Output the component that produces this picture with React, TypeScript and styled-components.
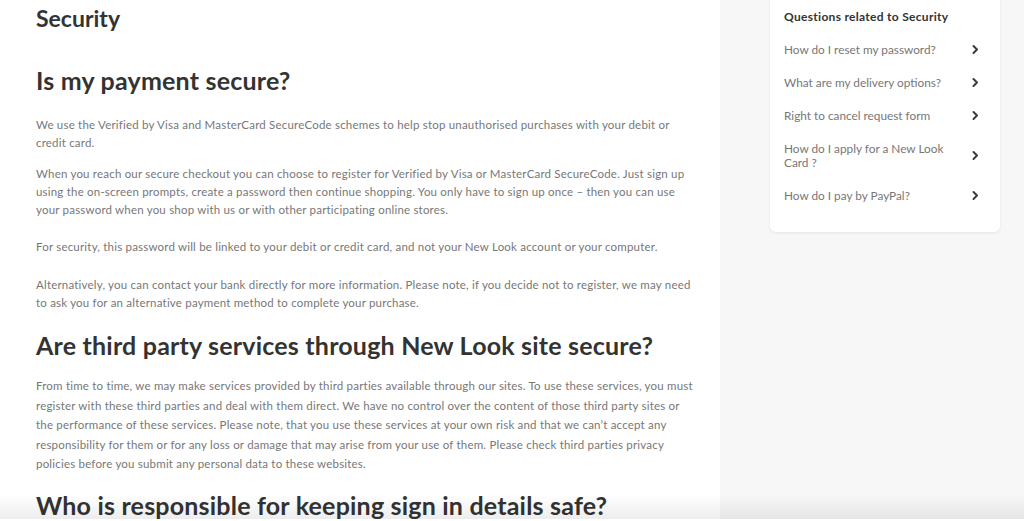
import React from 'react';
import styled, { createGlobalStyle } from 'styled-components';

const GlobalStyle = createGlobalStyle`
  html, body {
    margin: 0;
    padding: 0;
    background: #f7f7f7;
    font-family: Lato, 'Open Sans', sans-serif;
    -webkit-font-smoothing: antialiased;
  }
  * { box-sizing: border-box; }
`;

const related = [
  'How do I reset my password?',
  'What are my delivery options?',
  'Right to cancel request form',
  'How do I apply for a New Look Card ?',
  'How do I pay by PayPal?',
];

// lines kept as in the source layout so the wrapping matches
const Lines = ({ lines }: { lines: string[] }) => (
  <>
    {lines.map((l, i) => (
      <React.Fragment key={i}>
        {i > 0 && <br />}
        {l}
      </React.Fragment>
    ))}
  </>
);

const Chevron = () => (
  <svg width="9" height="11" viewBox="0 0 9 11" fill="none">
    <path d="M2.5 2L6 5.5L2.5 9" stroke="#3a3a3a" strokeWidth="2" strokeLinecap="round" strokeLinejoin="round" />
  </svg>
);

export default function App() {
  return (
    <>
      <GlobalStyle />
      <Layout>
        <Main>
          <PageTitle>Security</PageTitle>

          <Question $top={34}>Is my payment secure?</Question>
          <Paragraph $top={21}>
            <Lines
              lines={[
                'We use the Verified by Visa and MasterCard SecureCode schemes to help stop unauthorised purchases with your debit or',
                'credit card.',
              ]}
            />
          </Paragraph>
          <Paragraph $top={13}>
            <Lines
              lines={[
                'When you reach our secure checkout you can choose to register for Verified by Visa or MasterCard SecureCode. Just sign up',
                'using the on-screen prompts, create a password then continue shopping. You only have to sign up once – then you can use',
                'your password when you shop with us or with other participating online stores.',
              ]}
            />
          </Paragraph>
          <Paragraph $top={19}>
            For security, this password will be linked to your debit or credit card, and not your New Look account or your computer.
          </Paragraph>
          <Paragraph $top={20}>
            <Lines
              lines={[
                'Alternatively, you can contact your bank directly for more information. Please note, if you decide not to register, we may need',
                'to ask you for an alternative payment method to complete your purchase.',
              ]}
            />
          </Paragraph>

          <Question $top={18}>Are third party services through New Look site secure?</Question>
          <Paragraph $top={16} $loose>
            <Lines
              lines={[
                'From time to time, we may make services provided by third parties available through our sites. To use these services, you must',
                'register with these third parties and deal with them direct. We have no control over the content of those third party sites or',
                'the performance of these services. Please note, that you use these services at your own risk and that we can’t accept any',
                'responsibility for them or for any loss or damage that may arise from your use of them. Please check third parties privacy',
                'policies before you submit any personal data to these websites.',
              ]}
            />
          </Paragraph>

          <Question $top={16}>Who is responsible for keeping sign in details safe?</Question>
        </Main>

        <Aside>
          <Card>
            <CardTitle>Questions related to Security</CardTitle>
            <LinkList>
              {related.map((q) => (
                <LinkRow key={q}>
                  <LinkText>{q}</LinkText>
                  <Chevron />
                </LinkRow>
              ))}
            </LinkList>
          </Card>
        </Aside>
      </Layout>
      <BottomShade />
    </>
  );
}

const Layout = styled.div`
  display: flex;
  align-items: flex-start;
  height: 100vh;
  overflow: hidden;
`;

const Main = styled.main`
  width: 720px;
  flex-shrink: 0;
  min-height: 100vh;
  background: #fff;
  padding: 5px 0 40px 36px;
  color: #333;
`;

const PageTitle = styled.h1`
  margin: 0;
  font-size: 23px;
  line-height: 26px;
  font-weight: 700;
  color: #333;
`;

const Question = styled.h2<{ $top: number }>`
  margin: ${(p) => p.$top}px 0 0;
  font-size: 25px;
  line-height: 30px;
  font-weight: 700;
  color: #333;
  letter-spacing: 0.2px;
`;

const Paragraph = styled.p<{ $top: number; $loose?: boolean }>`
  margin: ${(p) => p.$top}px 0 0;
  font-size: 11.5px;
  line-height: ${(p) => (p.$loose ? '19.5px' : '18px')};
  color: #777;
  letter-spacing: 0.2px;
`;

const Aside = styled.aside`
  padding-left: 50px;
  width: 280px;
`;

const Card = styled.div`
  width: 230px;
  background: #fff;
  border-radius: 0 0 6px 6px;
  box-shadow: 0 1px 3px rgba(0, 0, 0, 0.08);
  padding: 10px 14px 20px;
`;

const CardTitle = styled.div`
  font-size: 12px;
  line-height: 14px;
  font-weight: 700;
  color: #333;
  letter-spacing: 0.3px;
`;

const LinkList = styled.div`
  display: flex;
  flex-direction: column;
  margin-top: 9px;
`;

const LinkRow = styled.div`
  display: flex;
  align-items: center;
  justify-content: space-between;
  padding: 9.5px 6px 9.5px 0;
  cursor: pointer;
`;

const LinkText = styled.span`
  font-size: 11.8px;
  line-height: 14px;
  color: #777;
  max-width: 175px;
`;

const BottomShade = styled.div`
  position: fixed;
  left: 0;
  right: 0;
  bottom: 0;
  height: 26px;
  background: linear-gradient(to bottom, rgba(0, 0, 0, 0), rgba(0, 0, 0, 0.07));
  border-bottom: 2px solid #fff;
  pointer-events: none;
`;
